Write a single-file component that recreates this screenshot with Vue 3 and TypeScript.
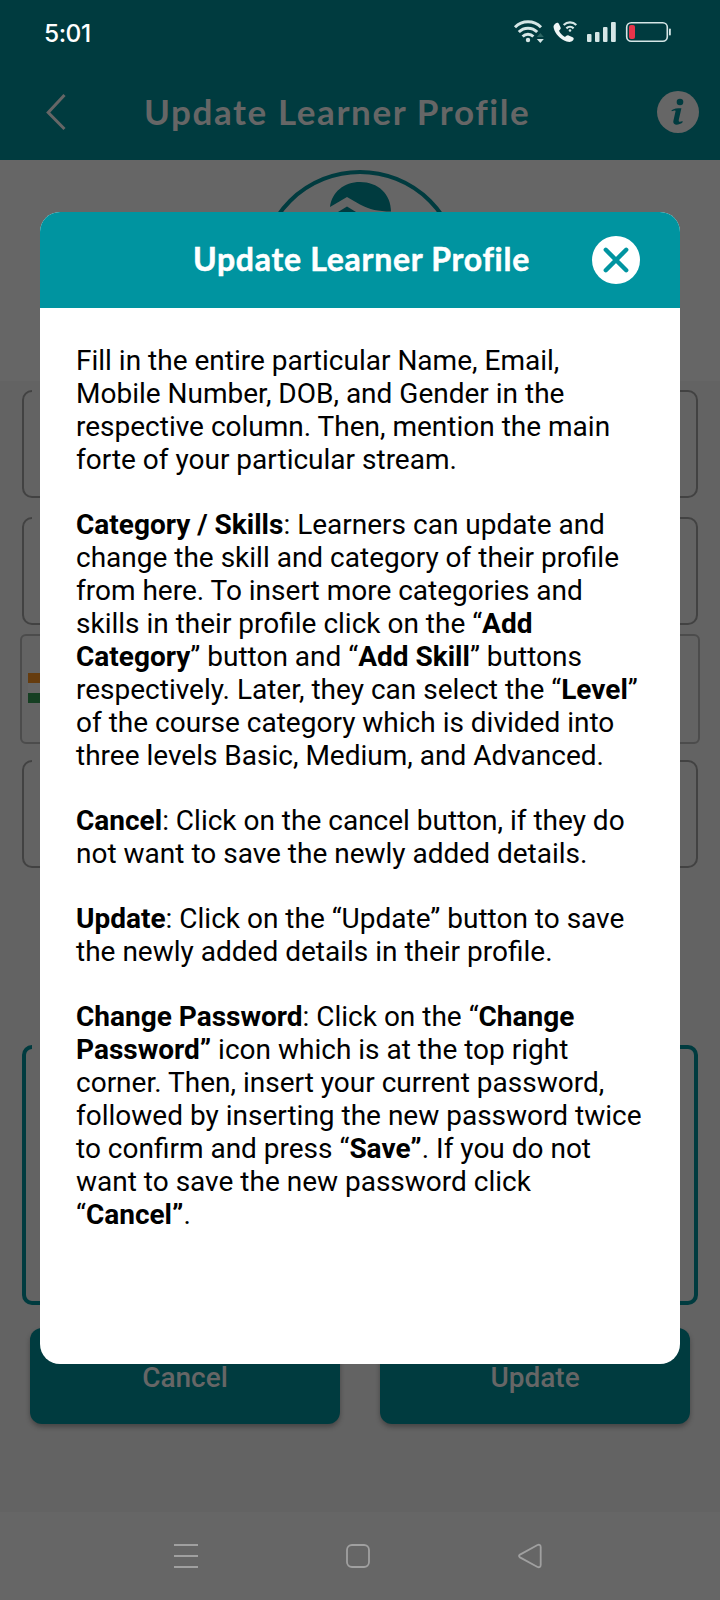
<script setup lang="ts">
interface Run { text: string; bold?: boolean }
type Line = Run[]

const n = (text: string): Run => ({ text })
const b = (text: string): Run => ({ text, bold: true })

const paragraphs: Line[][] = [
  [
    [n('Fill in the entire particular Name, Email,')],
    [n('Mobile Number, DOB, and Gender in the')],
    [n('respective column. Then, mention the main')],
    [n('forte of your particular stream.')],
  ],
  [
    [b('Category / Skills'), n(': Learners can update and')],
    [n('change the skill and category of their profile')],
    [n('from here. To insert more categories and')],
    [n('skills in their profile click on the “'), b('Add')],
    [b('Category'), n('” button and “'), b('Add Skill'), n('” buttons')],
    [n('respectively. Later, they can select the “'), b('Level'), n('”')],
    [n('of the course category which is divided into')],
    [n('three levels Basic, Medium, and Advanced.')],
  ],
  [
    [b('Cancel'), n(': Click on the cancel button, if they do')],
    [n('not want to save the newly added details.')],
  ],
  [
    [b('Update'), n(': Click on the “Update” button to save')],
    [n('the newly added details in their profile.')],
  ],
  [
    [b('Change Password'), n(': Click on the “'), b('Change')],
    [b('Password”'), n(' icon which is at the top right')],
    [n('corner. Then, insert your current password,')],
    [n('followed by inserting the new password twice')],
    [n('to confirm and press “'), b('Save”'), n('. If you do not')],
    [n('want to save the new password click')],
    [n('“'), b('Cancel”'), n('.')],
  ],
]
</script>

<template>
  <div class="screen">
    <header class="top">
      <div class="status">
        <span class="clock">5:01</span>
        <svg class="status-icons" width="170" height="36" viewBox="505 12 170 36">
          <g fill="none" stroke="#d5e6e6" stroke-width="3">
            <path d="M515 27.200a18.500 18.500 0 0 1 26 0" />
            <path d="M518.800 32a13 13 0 0 1 18.400 0" />
            <path d="M522.600 36.500a7.800 7.800 0 0 1 10.800 0" />
          </g>
          <circle cx="528" cy="40" r="2.200" fill="#d5e6e6" />
          <path d="M536.800 37l3.500-4 3.500 4z" fill="#2b6462" />
          <path d="M536.800 39l3.500 4 3.500-4z" fill="#d5e6e6" />
          <path d="M555.500 23.500c1.500-1.200 2.800-.8 3.500.6l1.600 3.400c.5 1.200-.2 2-1.600 3.200 1.300 2.700 3.300 4.800 6 6.300 1.400-1.300 2.300-2.100 3.600-1.500l4 1.700c1.300.7 1.500 1.800.5 3-1.700 2-4 2-6.500 1.200-6.500-2.300-11.500-7.700-12.900-13.500-.5-1.900.2-3.300 1.800-4.400z" fill="#eff6f6" />
          <g fill="none" stroke="#d5e6e6" stroke-width="2.200">
            <path d="M563.700 25a9 9 0 0 1 12.600 0" />
            <path d="M566.400 28.400a5.200 5.200 0 0 1 7.200 0" />
          </g>
          <circle cx="570" cy="30.500" r="1.300" fill="#d5e6e6" />
          <g fill="#d5e6e6">
            <rect x="587" y="34" width="4.500" height="8" rx="1" />
            <rect x="595" y="32" width="4.500" height="10" rx="1" />
            <rect x="603" y="27" width="4.500" height="15" rx="1" />
            <rect x="611" y="22" width="4.800" height="20" rx="1" />
          </g>
          <rect x="626.700" y="22.700" width="40.600" height="18.600" rx="4.500" fill="none" stroke="#d5e6e6" stroke-width="1.600" />
          <rect x="629" y="25" width="6" height="14" rx="2" fill="#e8344a" />
          <rect x="669" y="28.500" width="1.800" height="7" rx=".8" fill="#d5e6e6" />
        </svg>
      </div>
      <div class="bar">
        <svg class="back" width="22" height="40" viewBox="0 0 22 40">
          <path d="M19.500 3L3.200 20.500 19.500 37" fill="none" stroke="#666" stroke-width="3" />
        </svg>
        <h1>Update Learner Profile</h1>
        <svg class="info" width="42" height="42" viewBox="0 0 42 42">
          <circle cx="21" cy="21" r="21" fill="#666" />
          <circle cx="23" cy="11" r="3.300" fill="#003b3f" />
          <path d="M14.500 19.200c2.800-1.700 5.200-2 9.900-2l-2.600 11.500c-.5 2.300.8 2.700 3.900 1.400l-.4 1.700c-3.200 2.200-9.500 3.300-9-1.500l2.300-10.200c.2-1-1.700-.5-3.800.1z" fill="#003b3f" />
        </svg>
      </div>
    </header>

    <main class="form">
      <div class="avatar-row">
        <svg width="204" height="204" viewBox="258 168 204 204">
          <circle cx="360" cy="271" r="99" fill="none" stroke="#003b3f" stroke-width="4" />
          <path d="M330 207c2-15 14-25 30-25 18 0 31 12 31 29.500-13 0-21-2-31-7l-13-7.500z" fill="#003b3f" />
          <path d="M338 212l9-5.500 9 5.500z" fill="#003b3f" />
        </svg>
      </div>
      <div class="fields">
        <div class="field notch"></div>
        <div class="field notch second"></div>
        <div class="field phone">
          <span class="flag"><i class="saffron"></i><i class="green"></i></span>
        </div>
        <div class="field notch fourth"></div>
        <div class="field notch skills"></div>
        <div class="actions">
          <button type="button">Cancel</button>
          <button type="button">Update</button>
        </div>
      </div>
    </main>

    <nav class="system-nav">
      <svg width="24" height="26" viewBox="0 0 24 26"><path d="M0 2h24M0 13h24M0 24h24" stroke="#a0a0a0" stroke-width="2" /></svg>
      <svg width="24" height="26" viewBox="0 0 24 26"><rect x="1" y="2" width="22" height="22" rx="5" fill="none" stroke="#a0a0a0" stroke-width="1.800" /></svg>
      <svg width="24" height="26" viewBox="0 0 24 26"><path d="M2 11.600L19.500 2q3-1 3.200 2v18q-.2 3-3.200 2L2 14.400q-2-1.400 0-2.800z" fill="none" stroke="#a0a0a0" stroke-width="1.800" /></svg>
    </nav>

    <section class="dialog">
      <div class="dialog-head">
        <h2>Update Learner Profile</h2>
        <svg class="close" width="48" height="48" viewBox="0 0 48 48">
          <circle cx="24" cy="24" r="24" fill="#fff" />
          <path d="M13.800 13.800l20.400 20.400m0-20.400l-20.400 20.400" stroke="#0094a0" stroke-width="4.400" stroke-linecap="round" />
        </svg>
      </div>
      <div class="dialog-body">
        <p v-for="(lines, p) in paragraphs" :key="p">
          <span v-for="(line, l) in lines" :key="l" class="line"><span v-for="(run, r) in line" :key="r" :class="{ bold: run.bold }">{{ run.text }}</span></span>
        </p>
      </div>
    </section>
  </div>
</template>

<style>
body { margin: 0; background: #666; }
</style>

<style scoped>
.screen {
  position: relative;
  display: flex;
  flex-direction: column;
  width: 720px;
  height: 1600px;
  overflow: hidden;
  background: #666;
  font-family: Roboto, "Liberation Sans", sans-serif;
}
.screen * { box-sizing: border-box; }
.top { height: 160px; background: #003b3f; flex: none; }
.status {
  display: flex;
  justify-content: space-between;
  height: 64px;
  padding: 12px 45px 0 44px;
}
.clock {
  margin-top: 6px;
  color: #fff;
  font: 500 24.500px/30px Inter, sans-serif;
  letter-spacing: -0.5px;
}
.bar { display: flex; align-items: center; height: 96px; padding: 0 21px 0 45px; }
.bar h1 {
  flex: 1;
  margin: 0 0 2px 77px;
  color: #666;
  font: 700 35px/42px Lato, sans-serif;
  letter-spacing: 1.600px;
  white-space: nowrap;
}
.form { height: 1352px; flex: none; }
.avatar-row { display: flex; justify-content: center; height: 221px; padding-top: 8px; overflow: hidden; }
.avatar-row svg { flex: none; }
.fields { height: 1131px; padding: 9px 22px 0; background: #636363; }
.field { position: relative; height: 108px; border: 2px solid #424242; border-radius: 10px; }
.second { margin-top: 19px; }
.notch::before {
  content: "";
  position: absolute;
  top: -4px;
  left: 8px;
  width: 90px;
  height: 8px;
  background: #636363;
}
.phone {
  display: flex;
  align-items: center;
  height: 110px;
  margin: 9px -2px 0;
  padding-left: 6px;
  border-color: #4c4c4c;
  border-radius: 6px;
}
.flag { display: flex; flex-direction: column; justify-content: space-between; width: 44px; height: 30px; margin-top: -2px; background: #666; }
.flag i { height: 10px; }
.saffron { background: #663c0e; }
.green { background: #153f22; }
.fourth { margin-top: 16px; }
.skills { height: 260px; margin-top: 177px; border: 4px solid #003b3f; }
.skills::before { left: 6px; }
.actions { display: flex; justify-content: space-between; margin: 23px 8px 0; }
.actions button {
  width: 310px;
  height: 96px;
  padding: 3px 0 0;
  border: 0;
  border-radius: 12px;
  background: #003b3f;
  box-shadow: 0 3px 5px rgba(0, 0, 0, 0.3);
  color: #666;
  font: 500 28px/33px Roboto, sans-serif;
}
.system-nav { display: flex; justify-content: space-between; height: 88px; padding: 31px 178px 0 174px; }
.dialog {
  position: absolute;
  top: 212px;
  left: 40px;
  width: 640px;
  height: 1152px;
  overflow: hidden;
  border-radius: 20px;
  background: #fff;
}
.dialog-head { display: flex; align-items: center; height: 96px; padding: 0 40px 0 153px; background: #0094a0; }
.dialog-head h2 {
  flex: 1;
  margin: 0 0 2px;
  color: #fff;
  font: 700 32px/38px Lato, sans-serif;
  letter-spacing: 0.720px;
  -webkit-text-stroke: 0.500px #fff;
  white-space: nowrap;
}
.dialog-body { padding: 36px 0 0 36px; }
.dialog-body p { margin: 0 0 32px; color: #000; font-size: 28px; line-height: 33px; }
.line { display: block; white-space: nowrap; }
.bold { font-weight: 700; }
</style>
